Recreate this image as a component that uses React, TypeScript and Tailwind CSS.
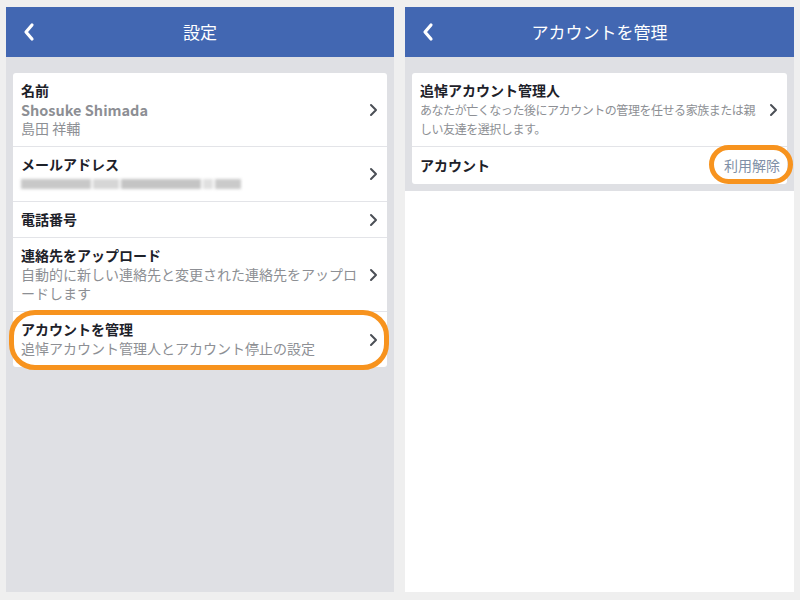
import React from 'react'

const font = { fontFamily: '"Noto Sans CJK JP", "Noto Sans", sans-serif' }

function Chevron() {
  return (
    <svg width="9" height="14" viewBox="0 0 9 14" className="shrink-0">
      <path d="M2 2l5 5-5 5" fill="none" stroke="#4b4f56" strokeWidth="2" strokeLinecap="round" strokeLinejoin="round" />
    </svg>
  )
}

function Header({ title }: { title: string }) {
  return (
    <div className="relative h-[50px] bg-[#4267b2] flex items-center justify-center shrink-0">
      <svg width="12" height="20" viewBox="0 0 12 20" className="absolute left-[17px] top-[15px]">
        <path d="M9 3L3 10l6 7" fill="none" stroke="#fff" strokeWidth="3.2" strokeLinecap="round" strokeLinejoin="round" />
      </svg>
      <span className="text-white text-[17px]">{title}</span>
    </div>
  )
}

function Row({ children, last }: { children: React.ReactNode; last?: boolean }) {
  return (
    <div className={'flex items-center pl-2 pr-[9px] ' + (last ? '' : 'border-b border-[#e3e4e8]')}>
      <div className="flex-1 min-w-0">{children}</div>
      <Chevron />
    </div>
  )
}

export default function App() {
  return (
    <div className="w-[800px] h-[600px] bg-[#efefef] flex gap-[11px] pl-[6px] pt-[7px] pb-[8px] overflow-hidden" style={font}>
      {/* settings panel */}
      <div className="w-[388px] flex flex-col bg-[#dfe0e4]">
        <Header title="設定" />
        <div className="mx-[7px] mt-4 bg-white rounded-[3px] text-[14px] leading-[19px]">
          <Row>
            <div className="py-2">
              <div className="font-bold text-[#1d2129]">名前</div>
              <div className="font-semibold text-[#8d8f94] text-[14.5px]">Shosuke Shimada</div>
              <div className="text-[#8d8f94]">島田 祥輔</div>
            </div>
          </Row>
          <Row>
            <div className="py-2">
              <div className="font-bold text-[#1d2129]">メールアドレス</div>
              <div className="flex h-[19px] items-center gap-[2px] blur-[1.5px]">
                <div className="w-[70px] h-[10px] bg-[#c8c8c8]" />
                <div className="w-[26px] h-[10px] bg-[#d6d6d6]" />
                <div className="w-[80px] h-[10px] bg-[#c4c4c4]" />
                <div className="w-[10px] h-[10px] bg-[#e0e0e0]" />
                <div className="w-[26px] h-[10px] bg-[#cacaca]" />
              </div>
            </div>
          </Row>
          <Row>
            <div className="py-2 font-bold text-[#1d2129]">電話番号</div>
          </Row>
          <Row>
            <div className="py-2 pr-3">
              <div className="font-bold text-[#1d2129]">連絡先をアップロード</div>
              <div className="text-[#8d8f94]">自動的に新しい連絡先と変更された連絡先をアップロードします</div>
            </div>
          </Row>
          <div className="relative">
            <Row last>
              <div className="pt-2 pb-[9px]">
                <div className="font-bold text-[#1d2129]">アカウントを管理</div>
                <div className="text-[#8d8f94]">追悼アカウント管理人とアカウント停止の設定</div>
              </div>
            </Row>
            <div className="absolute -left-[4px] -right-[2px] -top-[2px] -bottom-[3px] border-[5px] border-[#f7931e] rounded-[26px]" />
          </div>
        </div>
      </div>

      {/* manage account panel */}
      <div className="w-[389px] flex flex-col bg-white">
        <Header title="アカウントを管理" />
        <div className="bg-[#dfe0e4] px-[7px] pt-4 pb-[7px]">
          <div className="bg-white rounded-[3px] text-[14px] leading-[19px]">
            <Row>
              <div className="py-2">
                <div className="font-bold text-[#1d2129]">追悼アカウント管理人</div>
                <div className="text-[#8d8f94] text-[12px] tracking-[-0.45px] leading-[19px]">
                  <div className="whitespace-nowrap">あなたが亡くなった後にアカウントの管理を任せる家族または親</div>
                  <div>しい友達を選択します。</div>
                </div>
              </div>
            </Row>
            <div className="flex items-center justify-between pl-2 pr-[7px] h-[37px]">
              <div className="font-bold text-[#1d2129]">アカウント</div>
              <div className="relative text-[#7f8fa6]">
                利用解除
                <div className="absolute -left-[15px] -right-[13px] -top-[11px] -bottom-[9px] border-[5px] border-[#f7931e] rounded-full" />
              </div>
            </div>
          </div>
        </div>
      </div>
    </div>
  )
}
